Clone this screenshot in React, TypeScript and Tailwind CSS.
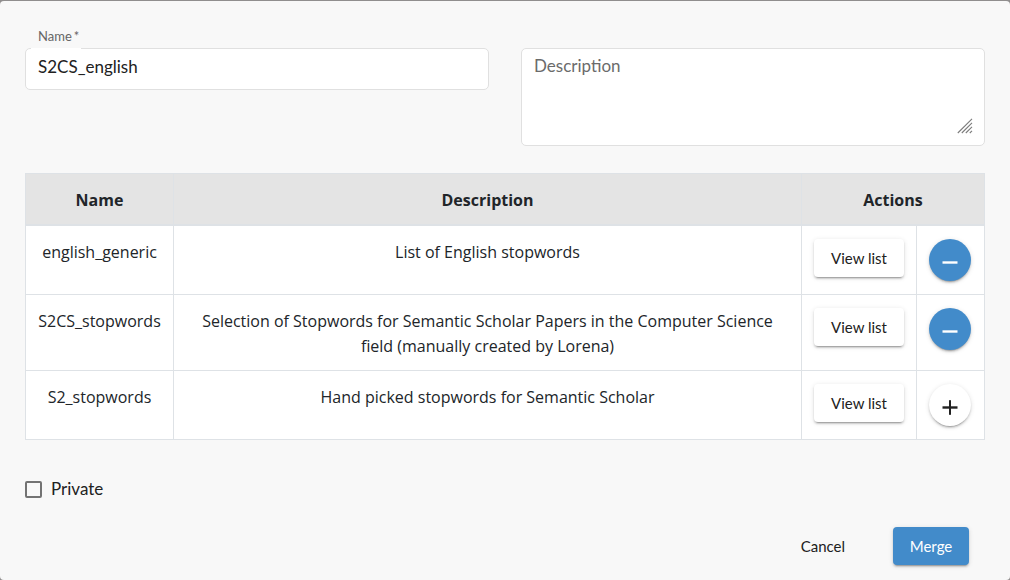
import { useState } from "react";

type StopwordList = { name: string; description: string };

const lists: StopwordList[] = [
  { name: "english_generic", description: "List of English stopwords" },
  {
    name: "S2CS_stopwords",
    description:
      "Selection of Stopwords for Semantic Scholar Papers in the Computer Science field (manually created by Lorena)",
  },
  { name: "S2_stopwords", description: "Hand picked stopwords for Semantic Scholar" },
];

const raised =
  "shadow-[0_3px_1px_-2px_rgba(0,0,0,0.2),0_2px_2px_0_rgba(0,0,0,0.14),0_1px_5px_0_rgba(0,0,0,0.12)]";

function ToggleButton({ list, selected, onToggle }: { list: string; selected: boolean; onToggle: () => void }) {
  return (
    <button
      type="button"
      aria-label={`${selected ? "Remove" : "Add"} ${list}`}
      onClick={onToggle}
      className={`flex size-[42px] items-center justify-center rounded-full pt-1 ${raised} ${
        selected ? "bg-[#428bca] text-white" : "bg-white text-[#212121]"
      }`}
    >
      <svg className="size-4" viewBox="0 0 16 16" fill="currentColor" aria-hidden="true">
        <rect x="0.5" y="7.3" width="15" height="2.4" />
        {!selected && <rect x="7" y="1.2" width="2" height="14.6" />}
      </svg>
    </button>
  );
}

export default function App() {
  const [selected, setSelected] = useState<string[]>(["english_generic", "S2CS_stopwords"]);
  const [name, setName] = useState("S2CS_english");

  const toggle = (list: string) =>
    setSelected((current) =>
      current.includes(list) ? current.filter((item) => item !== list) : [...current, list],
    );

  return (
    <div className="flex min-h-screen flex-col bg-[#908e8e] pt-px font-['Lato','Liberation_Sans',sans-serif] text-[#212121]">
      <form
        className="flex flex-1 flex-col rounded bg-[#f8f8f8] px-[25px] pt-[26px] pb-3"
        onSubmit={(event) => event.preventDefault()}
      >
        <div className="grid grid-cols-2 gap-8">
          <div>
            <label htmlFor="name" className="flex gap-[2px] px-[13px] text-[13px] leading-[18px] text-[#666666]">
              Name <span>*</span>
            </label>
            <div className="relative mt-[3px]">
              <input
                id="name"
                value={name}
                onChange={(event) => setName(event.target.value)}
                className="block h-[42px] w-full rounded-[5px] border border-[#e0e0e0] bg-white px-3 pb-[5px] text-[17px] outline-none"
              />
              <span className="absolute top-0 left-[6px] h-px w-[50px] bg-white" />
            </div>
          </div>
          <div className="relative mt-[21px]">
            <textarea
              aria-label="Description"
              placeholder="Description"
              className="block h-[98px] w-full resize-none rounded-[5px] border border-[#e0e0e0] bg-white px-3 py-[6px] text-[17px] leading-[21px] outline-none placeholder:text-[#6b6b6b]"
            />
            <svg
              className="pointer-events-none absolute right-3 bottom-3 size-4"
              viewBox="0 0 16 16"
              stroke="#7c7c7c"
              strokeWidth="1.1"
              aria-hidden="true"
            >
              <path d="M0.8 15 15 0.8M4.8 15 15 4.8M8.8 15 15 8.8M12.8 15 15 12.8" />
            </svg>
          </div>
        </div>

        <table className="mt-[27px] w-full table-fixed border-collapse border border-[#dee2e6] bg-white text-center font-['Open_Sans','Noto_Sans',sans-serif] text-[16px] leading-[25px] text-[#212529]">
          <colgroup>
            <col className="w-[148px]" />
            <col />
            <col className="w-[115px]" />
            <col className="w-[68px]" />
          </colgroup>
          <thead className="bg-[#e4e4e4]">
            <tr className="border-b-2 border-[#dee2e6]">
              <th className="border-r border-[#dee2e6] px-3 pt-[14px] pb-[11px] font-bold">Name</th>
              <th className="border-r border-[#dee2e6] px-3 pt-[14px] pb-[11px] font-bold">Description</th>
              <th colSpan={2} className="px-3 pt-[14px] pb-[11px] font-bold">
                Actions
              </th>
            </tr>
          </thead>
          <tbody>
            {lists.map((list) => (
              <tr key={list.name} className="border-b border-[#dee2e6] align-top">
                <td className="border-r border-[#dee2e6] pt-[14px] pb-[11px]">{list.name}</td>
                <td className="border-r border-[#dee2e6] px-6 pt-[14px] pb-[11px]">{list.description}</td>
                <td className="border-r border-[#dee2e6] px-3 py-[13px]">
                  <button
                    type="button"
                    className={`block h-[38px] w-full rounded bg-white font-['Lato','Liberation_Sans',sans-serif] text-[15px] text-[#212121] ${raised}`}
                  >
                    View list
                  </button>
                </td>
                <td className="px-3 py-[13px]">
                  <ToggleButton
                    list={list.name}
                    selected={selected.includes(list.name)}
                    onToggle={() => toggle(list.name)}
                  />
                </td>
              </tr>
            ))}
          </tbody>
        </table>

        <label className="mt-[37px] flex items-center gap-[9px] self-start text-[17px] leading-6">
          <input
            type="checkbox"
            className="size-[17px] appearance-none rounded-[2px] border-2 border-[#737373] checked:bg-[#428bca]"
          />
          Private
        </label>

        <div className="mt-[26px] flex items-center justify-end gap-8 pr-4 text-[15px]">
          <button type="button" className="h-[38px] rounded px-4">
            Cancel
          </button>
          <button type="submit" className={`h-[38px] min-w-[76px] rounded bg-[#428bca] px-4 text-white ${raised}`}>
            Merge
          </button>
        </div>
      </form>
    </div>
  );
}
